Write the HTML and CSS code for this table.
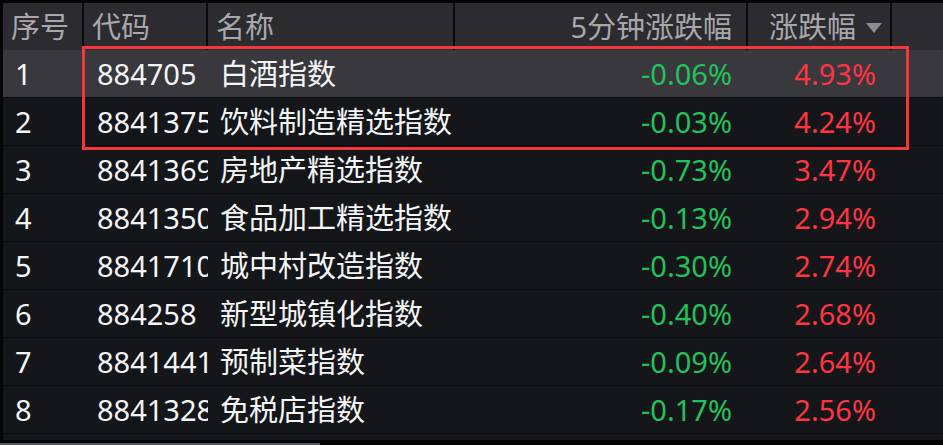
FILE: index.html
```html
<!DOCTYPE html>
<html lang="zh-CN">
<head>
<meta charset="utf-8">
<title>指数涨跌幅</title>
<link rel="stylesheet" href="styles.css">
</head>
<body>
<div class="board">
  <div class="grid">
    <div class="row head">
      <div class="cell">序号</div>
      <div class="cell">代码</div>
      <div class="cell">名称</div>
      <div class="cell num">5分钟涨跌幅</div>
      <div class="cell num sort">涨跌幅<span class="tri"></span></div>
      <div class="cell"></div>
    </div>
    <div class="row sel">
      <div class="cell">1</div><div class="cell code">884705</div><div class="cell">白酒指数</div>
      <div class="cell num down">-0.06%</div><div class="cell num up">4.93%</div><div class="cell"></div>
    </div>
    <div class="row">
      <div class="cell">2</div><div class="cell code">8841375</div><div class="cell">饮料制造精选指数</div>
      <div class="cell num down">-0.03%</div><div class="cell num up">4.24%</div><div class="cell"></div>
    </div>
    <div class="row">
      <div class="cell">3</div><div class="cell code">8841369</div><div class="cell">房地产精选指数</div>
      <div class="cell num down">-0.73%</div><div class="cell num up">3.47%</div><div class="cell"></div>
    </div>
    <div class="row">
      <div class="cell">4</div><div class="cell code">8841350</div><div class="cell">食品加工精选指数</div>
      <div class="cell num down">-0.13%</div><div class="cell num up">2.94%</div><div class="cell"></div>
    </div>
    <div class="row">
      <div class="cell">5</div><div class="cell code">8841710</div><div class="cell">城中村改造指数</div>
      <div class="cell num down">-0.30%</div><div class="cell num up">2.74%</div><div class="cell"></div>
    </div>
    <div class="row">
      <div class="cell">6</div><div class="cell code">884258</div><div class="cell">新型城镇化指数</div>
      <div class="cell num down">-0.40%</div><div class="cell num up">2.68%</div><div class="cell"></div>
    </div>
    <div class="row">
      <div class="cell">7</div><div class="cell code">8841441</div><div class="cell">预制菜指数</div>
      <div class="cell num down">-0.09%</div><div class="cell num up">2.64%</div><div class="cell"></div>
    </div>
    <div class="row">
      <div class="cell">8</div><div class="cell code">8841328</div><div class="cell">免税店指数</div>
      <div class="cell num down">-0.17%</div><div class="cell num up">2.56%</div><div class="cell"></div>
    </div>
    <div class="filler"></div>
  </div>
  <div class="track"><div class="thumb"></div></div>
  <div class="mark"></div>
</div>
</body>
</html>
```
FILE: styles.css
```css
* { box-sizing: border-box; }
html, body {
  margin: 0;
  padding: 0;
  background: #050505;
}
body {
  width: 943px;
  height: 445px;
  overflow: hidden;
  font-family: "Noto Sans", "Noto Sans CJK SC", sans-serif;
  font-size: 29px;
  color: #f4f6f8;
}
.board {
  position: relative;
  width: 943px;
  height: 445px;
  padding-top: 3px;
  display: flex;
  flex-direction: column;
}
.grid {
  display: flex;
  flex-direction: column;
  padding-left: 3px;
}
.row {
  display: grid;
  grid-template-columns: 81px 124px 247px 293px 144px 1fr;
  height: 48px;
  background: #14161a;
  border-bottom: 1px solid #0c0d10;
}
.cell {
  display: flex;
  align-items: center;
  padding-left: 12px;
  white-space: nowrap;
  overflow: hidden;
  line-height: 1;
}
.cell.code { padding-left: 13px; }
.cell.num {
  justify-content: flex-end;
  padding-left: 0;
  padding-right: 16px;
}
.head {
  height: 47px;
  background: #2b2b30;
  border-bottom: 0;
  color: #a8a8ab;
}
.head .cell {
  padding-left: 8px;
  border-right: 2px solid #0a0a0c;
}
.head .cell.num { padding-left: 0; padding-right: 14px; }
.head .cell.sort { padding-right: 8px; }
.head .cell:last-child { border-right: 0; }
.tri {
  width: 0;
  height: 0;
  margin-left: 10px;
  margin-top: 2px;
  border-left: 8px solid transparent;
  border-right: 8px solid transparent;
  border-top: 10px solid #8c8c90;
}
.sel { background: #38383d; }
.down { color: #22c25a; }
.up { color: #ff3441; }
.filler {
  height: 6px;
  background: #14161a;
}
.track {
  height: 5px;
  display: flex;
  align-items: flex-end;
}
.thumb {
  width: 320px;
  height: 2px;
  background: #55565b;
}
.mark {
  position: absolute;
  left: 82px;
  top: 46px;
  width: 827px;
  height: 104px;
  border: 3px solid #f4363c;
}
```
